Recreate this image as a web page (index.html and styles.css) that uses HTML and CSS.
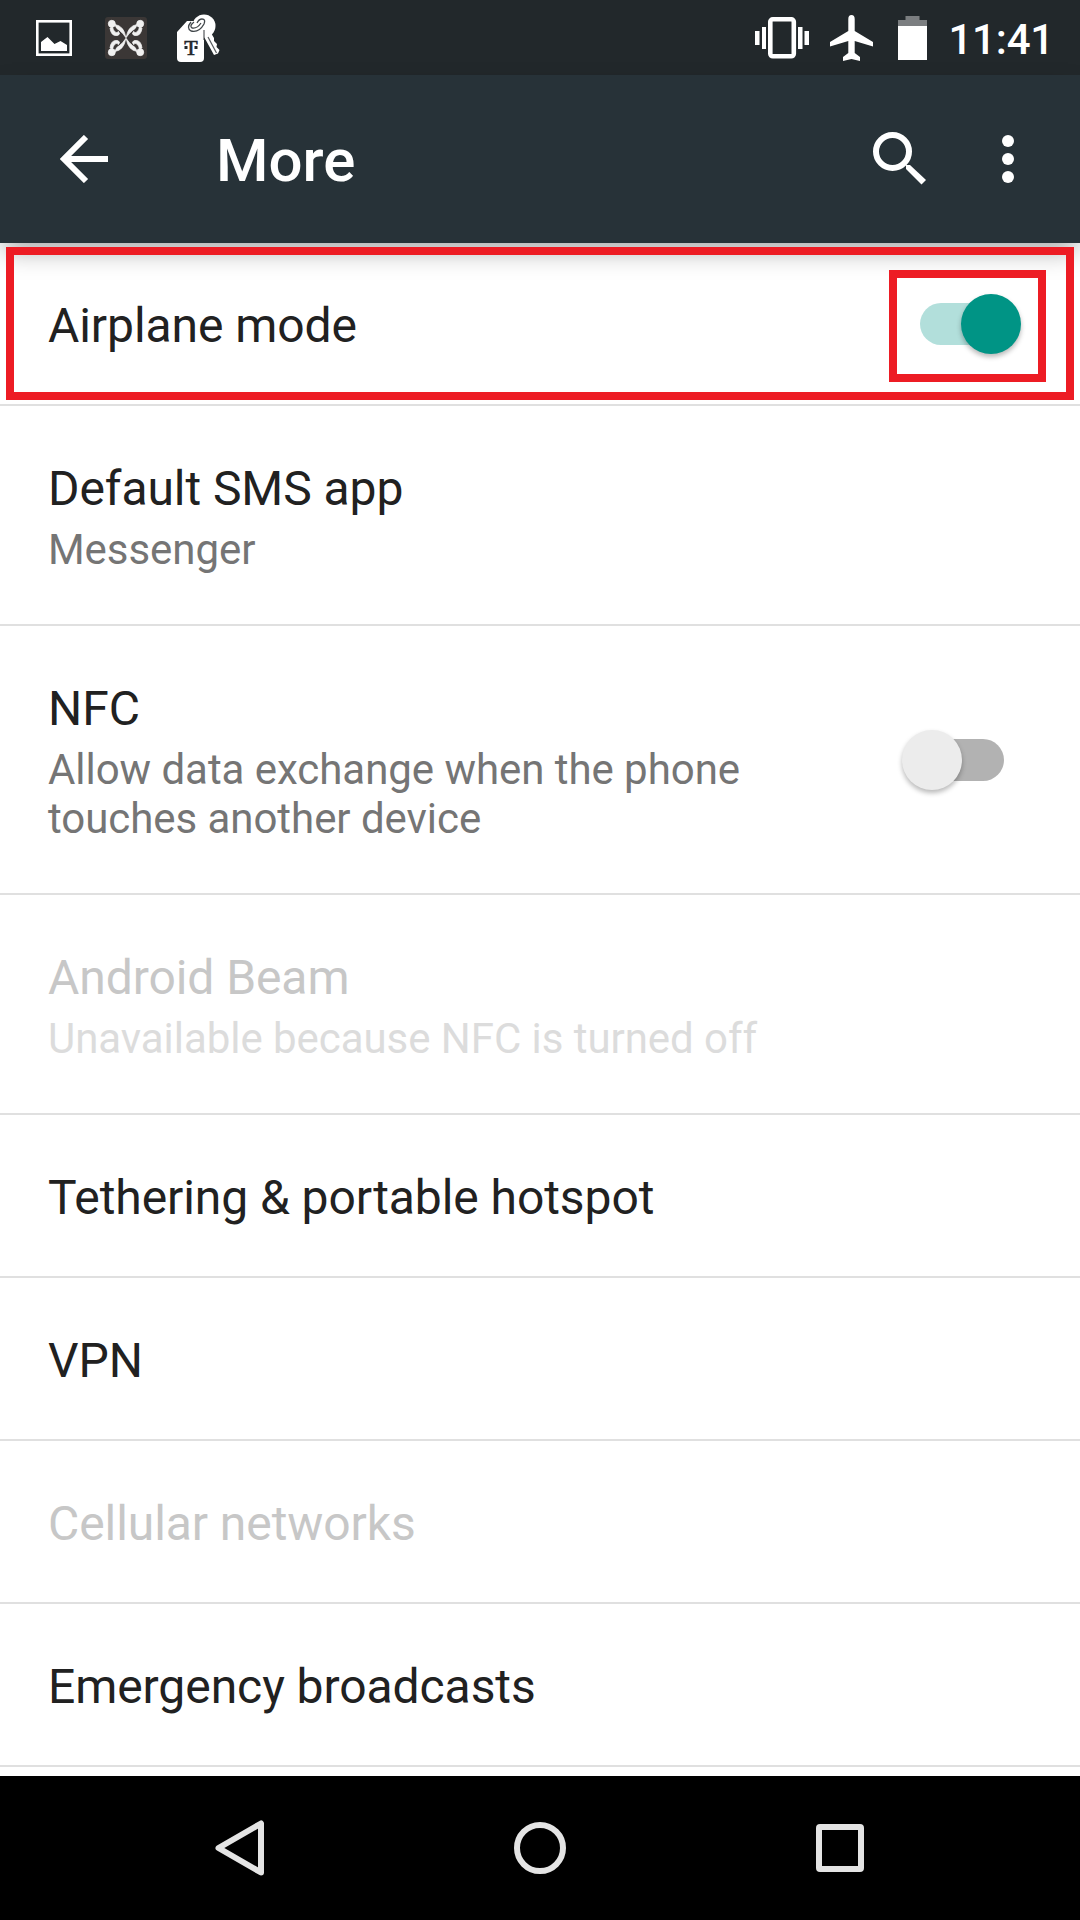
FILE: index.html
```html
<!DOCTYPE html>
<html lang="en">
<head>
<meta charset="utf-8">
<title>More</title>
<link rel="stylesheet" href="styles.css">
</head>
<body>
<div class="screen">
  <header class="status-bar">
    <div class="status-left">
      <svg width="36" height="36" viewBox="0 0 36 36"><rect x="1.3" y="1.3" width="33.4" height="33.4" fill="none" stroke="#fff" stroke-width="2.6"/><path d="M5 31V22l6.500-5 7 7 6-3 6.500 4v6z" fill="#fff"/></svg>
      <svg width="42" height="42" viewBox="0 0 42 42">
        <defs><g id="swirl"><circle cx="6.800" cy="6.800" r="3.500"/><path d="M10 7.500Q19 9 20.800 20.500Q18 16 14.500 13.500Q11 12 10 7.500z"/><path d="M5 11Q6 19.500 12.500 18.500Q16 17.500 13.500 14.500Q12 16.500 10 15Q8 13 7.500 10z"/></g></defs>
        <rect width="42" height="42" rx="3" fill="#3b3736"/>
        <g fill="#f0f0f0" stroke="#f0f0f0" stroke-width="0.8"><use href="#swirl"/><use href="#swirl" transform="matrix(-1 0 0 1 42 0)"/><use href="#swirl" transform="rotate(180 21 21)"/><use href="#swirl" transform="matrix(1 0 0 -1 0 42)"/></g>
      </svg>
      <svg width="43" height="48" viewBox="0 0 43 48">
        <circle cx="27" cy="12" r="11.500" fill="#fff"/>
        <path d="M26 21l11 20 4-1.500 1.500-3.500-3-3 .5-3-3-3 0-3-3-5z" fill="#fff"/><path d="M31 23l8.500 16" stroke="#555a5d" stroke-width="1.200"/>
        <path d="M10 7h10q7 1 7 8v29q0 4-4 4H4q-4 0-4-4V18z" fill="#fff"/>
        <path d="M27 16v10" stroke="#32373b" stroke-width="1"/>
        <g fill="none" stroke="#40464a" stroke-width="1.300"><path d="M14 8Q9 14 14 17Q22 19 27 10Q29 5 25 5Q22 5 20 9"/><path d="M17 8Q12 12 15 14Q20 15 24 9"/></g>
        <text x="14" y="41" class="tag-letter" text-anchor="middle">T</text>
        <path d="M7.500 32h3v3h-3zM17.500 32h3v3h-3z" fill="#23282c"/>
      </svg>
    </div>
    <div class="status-right">
      <svg class="vibrate" width="54" height="42" viewBox="0 0 54 42"><rect x="15.300" y="2.300" width="23.500" height="37" rx="2.500" fill="none" stroke="#fff" stroke-width="4.600"/><path d="M0 14h4.500v14H0zM7 10h4v22H7zM43 10h4.500v22H43zM49.500 14h4.500v14h-4.500z" fill="#fff"/></svg>
      <svg class="plane" width="43" height="46" viewBox="0 0 43 46"><path d="M18.300 4a3.200 4 0 0 1 6.400 0V16L43 27v4.500L24.700 26v12l5.300 4v4l-8.500-2-8.500 2v-4l5.300-4V26L0 31.500V27L18.300 16z" fill="#fff"/></svg>
      <svg class="battery" width="29" height="44" viewBox="0 0 29 44"><path d="M0 4h7.500V0h14v4H29v6H0z" fill="#7b7e80"/><path d="M0 10h29v34H0z" fill="#fff"/></svg>
      <span class="clock">11:41</span>
    </div>
  </header>
  <nav class="app-bar">
    <svg width="48" height="48" viewBox="0 0 48 48"><path d="M48 24H6M26 2L4 24l22 22" fill="none" stroke="#fff" stroke-width="6"/></svg>
    <h1 class="title">More</h1>
    <svg class="search" width="54" height="54" viewBox="0 0 54 54"><circle cx="19.500" cy="19.500" r="16.500" fill="none" stroke="#fff" stroke-width="6"/><path d="M33 33h4L53 48l-4.500 4.500L33 37z" fill="#fff"/></svg>
    <svg class="overflow" width="12" height="48" viewBox="0 0 12 48" fill="#fff"><circle cx="6" cy="6" r="6"/><circle cx="6" cy="24" r="6"/><circle cx="6" cy="42" r="6"/></svg>
  </nav>
  <main class="settings">
    <section class="row highlighted">
      <div><div class="label">Airplane mode</div></div>
      <div class="switch on"><span class="track"></span><span class="thumb"></span></div>
    </section>
    <section class="row double">
      <div><div class="label">Default SMS app</div><div class="summary">Messenger</div></div>
    </section>
    <section class="row triple">
      <div><div class="label">NFC</div><div class="summary">Allow data exchange when the phone<br>touches another device</div></div>
      <div class="switch off"><span class="track"></span><span class="thumb"></span></div>
    </section>
    <section class="row double disabled">
      <div><div class="label">Android Beam</div><div class="summary">Unavailable because NFC is turned off</div></div>
    </section>
    <section class="row"><div class="label">Tethering &amp; portable hotspot</div></section>
    <section class="row"><div class="label">VPN</div></section>
    <section class="row disabled"><div class="label">Cellular networks</div></section>
    <section class="row"><div class="label">Emergency broadcasts</div></section>
  </main>
  <footer class="nav-bar">
    <svg width="50" height="56" viewBox="0 0 50 56"><path d="M46 3.500v49L3.500 28z" fill="none" stroke="#e4e4e4" stroke-width="6" stroke-linejoin="round"/></svg>
    <svg width="52" height="52" viewBox="0 0 52 52"><circle cx="26" cy="26" r="23" fill="none" stroke="#e4e4e4" stroke-width="6"/></svg>
    <svg width="48" height="48" viewBox="0 0 48 48"><path fill-rule="evenodd" d="M4 0h40a4 4 0 0 1 4 4v40a4 4 0 0 1-4 4H4a4 4 0 0 1-4-4V4a4 4 0 0 1 4-4zM6 6v36h36V6z" fill="#e4e4e4"/></svg>
  </footer>
</div>
</body>
</html>
```
FILE: styles.css
```css
*, *::before, *::after { box-sizing: border-box; }

body {
  margin: 0;
  font-family: Roboto, "Liberation Sans", sans-serif;
  background: #fff;
}

svg { display: block; flex: none; }

.screen {
  display: flex;
  flex-direction: column;
  width: 1080px;
  height: 1920px;
  overflow: hidden;
}

.status-bar {
  display: flex;
  justify-content: space-between;
  flex: none;
  height: 75px;
  padding: 0 26px 0 36px;
  background: #22282b;
}

.status-left, .status-right { display: flex; align-items: center; }
.status-left { gap: 33px; }
.status-left svg:last-child { margin-left: -3px; }
.vibrate { margin-right: 21px; }
.plane { margin-right: 25px; }
.battery { margin-right: 21px; }

.tag-letter {
  font: 22px "Liberation Serif", serif;
  fill: #23282c;
  stroke: #23282c;
  stroke-width: 0.6px;
}

.clock {
  color: #fff;
  font-size: 42px;
  font-weight: 500;
  line-height: 50px;
  letter-spacing: -0.2px;
  margin-top: 4px;
}

.app-bar {
  display: flex;
  align-items: center;
  flex: none;
  height: 168px;
  padding: 0 66px 0 60px;
  background: #273238;
  box-shadow: 0 12px 24px -4px rgba(0, 0, 0, 0.34);
  z-index: 1;
}

.title {
  flex: 1;
  margin: 4px 0 0 108px;
  color: #fff;
  font-size: 60px;
  font-weight: 500;
  line-height: 70px;
}

.overflow { margin-left: 75px; }

.settings { flex: 1; min-height: 0; }

.row {
  display: flex;
  justify-content: space-between;
  position: relative;
  height: 163px;
  padding: 55px 58px 0 48px;
  border-bottom: 2px solid #e0e0e0;
}

.double { height: 220px; }
.triple { height: 269px; padding-right: 76px; }

.label {
  color: #212121;
  font-size: 48px;
  line-height: 56px;
  letter-spacing: -0.07px;
}

.summary {
  margin-top: 8px;
  color: #757575;
  font-size: 42px;
  line-height: 49px;
  letter-spacing: -0.05px;
}

.disabled .label { color: #c7c7c7; }
.disabled .summary { color: #dcdcdc; }

/* Callout frames drawn over the first row */
.highlighted { z-index: 2; }

.highlighted::before, .highlighted::after {
  content: "";
  position: absolute;
  border: 8px solid #ed1c24;
}

.highlighted::before { top: 4px; left: 6px; width: 1068px; height: 153px; }
.highlighted::after { top: 27px; left: 889px; width: 157px; height: 112px; }

.switch {
  position: relative;
  align-self: center;
  width: 102px;
  height: 60px;
  margin-top: -55px;
}

.track, .thumb { position: absolute; }
.track { top: 9px; width: 84px; height: 42px; border-radius: 21px; }
.thumb {
  top: 0;
  width: 60px;
  height: 60px;
  border-radius: 50%;
  box-shadow: 0 3px 5px rgba(0, 0, 0, 0.28);
}

.on .track { left: 0; background: #b2dfdb; }
.on .thumb { right: 1px; background: #009485; }
.off .track { right: 0; background: #b2b2b2; }
.off .thumb { left: 0; background: #ececec; }

.nav-bar {
  display: flex;
  align-items: center;
  justify-content: space-between;
  flex: none;
  height: 144px;
  padding: 0 216px 0 215px;
  background: #000;
}

.nav-bar svg:nth-child(2) { margin-right: 2px; }
```
